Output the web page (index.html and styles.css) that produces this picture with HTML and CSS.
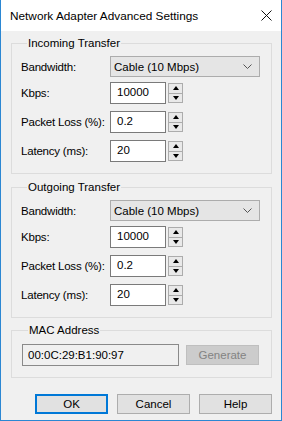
FILE: index.html
```html
<!DOCTYPE html>
<html lang="en">
<head>
    <meta charset="UTF-8">
    <title>Network Adapter Advanced Settings</title>
    <link rel="stylesheet" href="styles.css">
</head>
<body>
    <div class="window">
        <div class="titlebar">
            <span class="title">Network Adapter Advanced Settings</span>
            <svg class="close" width="11" height="11" viewBox="0 0 11 11">
                <path d="M0.5 0.5 L10.5 10.5 M10.5 0.5 L0.5 10.5" stroke="#111" stroke-width="1" fill="none"/>
            </svg>
        </div>

        <div class="content">
            <fieldset class="group">
                <legend>Incoming Transfer</legend>
                <div class="row row-select">
                    <span class="label">Bandwidth:</span>
                    <div class="select">
                        <span>Cable (10 Mbps)</span>
                        <svg width="9" height="6" viewBox="0 0 9 6"><path d="M0.5 0.5 L4.5 4.5 L8.5 0.5" stroke="#555" fill="none"/></svg>
                    </div>
                </div>
                <div class="row">
                    <span class="label">Kbps:</span>
                    <div class="field"><span class="input">10000</span><div class="spin"><span class="up"></span><span class="down"></span></div></div>
                </div>
                <div class="row">
                    <span class="label">Packet Loss (%):</span>
                    <div class="field"><span class="input">0.2</span><div class="spin"><span class="up"></span><span class="down"></span></div></div>
                </div>
                <div class="row">
                    <span class="label">Latency (ms):</span>
                    <div class="field"><span class="input">20</span><div class="spin"><span class="up"></span><span class="down"></span></div></div>
                </div>
            </fieldset>

            <fieldset class="group group-out">
                <legend>Outgoing Transfer</legend>
                <div class="row row-select">
                    <span class="label">Bandwidth:</span>
                    <div class="select">
                        <span>Cable (10 Mbps)</span>
                        <svg width="9" height="6" viewBox="0 0 9 6"><path d="M0.5 0.5 L4.5 4.5 L8.5 0.5" stroke="#555" fill="none"/></svg>
                    </div>
                </div>
                <div class="row">
                    <span class="label">Kbps:</span>
                    <div class="field"><span class="input">10000</span><div class="spin"><span class="up"></span><span class="down"></span></div></div>
                </div>
                <div class="row">
                    <span class="label">Packet Loss (%):</span>
                    <div class="field"><span class="input">0.2</span><div class="spin"><span class="up"></span><span class="down"></span></div></div>
                </div>
                <div class="row">
                    <span class="label">Latency (ms):</span>
                    <div class="field"><span class="input">20</span><div class="spin"><span class="up"></span><span class="down"></span></div></div>
                </div>
            </fieldset>

            <fieldset class="group group-mac">
                <legend>MAC Address</legend>
                <div class="mac-row">
                    <span class="mac-input">00:0C:29:B1:90:97</span>
                    <span class="btn btn-disabled">Generate</span>
                </div>
            </fieldset>

            <div class="buttons">
                <span class="btn btn-default">OK</span>
                <span class="btn">Cancel</span>
                <span class="btn">Help</span>
            </div>
        </div>
    </div>
</body>
</html>
```

FILE: styles.css
```css
* {
    margin: 0;
    padding: 0;
    box-sizing: border-box;
}

body {
    font-family: "Liberation Sans", Arial, sans-serif;
    font-size: 11.5px;
    color: #000;
    background: #fff;
}

.window {
    width: 282px;
    height: 421px;
    display: flex;
    flex-direction: column;
    border: 1px solid #2b87d3;
    border-top: none;
    background: #f0f0f0;
}

.titlebar {
    height: 31px;
    background: #fff;
    display: flex;
    align-items: center;
    justify-content: space-between;
    padding: 0 9px 0 9px;
}

.title {
    font-size: 11.8px;
}

.content {
    flex: 1;
    padding: 0 9px 0 10px;
    display: flex;
    flex-direction: column;
}

.group {
    border: 1px solid #dcdcdc;
    margin-top: 4px;
    padding: 5px 9px 11px 9px;
}

.group-out {
    margin-top: 5px;
}

.group legend {
    line-height: 16px;
    padding: 0 1px;
    margin-left: 6px;
}

.row {
    display: flex;
    align-items: center;
    height: 22px;
    margin-top: 7px;
}

.row-select {
    height: 21px;
    margin-top: 0;
}

.row-select + .row {
    margin-top: 5px;
}

.label {
    width: 89px;
    flex-shrink: 0;
    white-space: nowrap;
    letter-spacing: -0.2px;
}

.select {
    width: 150px;
    height: 21px;
    background: #e5e5e5;
    border: 1px solid #acacac;
    display: flex;
    align-items: center;
    justify-content: space-between;
    padding: 0 7px 0 3px;
}

.field {
    display: flex;
    align-items: center;
    gap: 2px;
}

.input {
    width: 56px;
    height: 22px;
    background: #fff;
    border: 1px solid #7a7a7a;
    padding-left: 6px;
    line-height: 18px;
}

.spin {
    display: flex;
    flex-direction: column;
    width: 15px;
    height: 20px;
}

.spin span {
    flex: 1;
    background: #e9e9e9;
    border: 1px solid #acacac;
    display: flex;
    align-items: center;
    justify-content: center;
}

.spin .down {
    border-top: none;
}

.spin span::after {
    content: "";
    border-left: 3px solid transparent;
    border-right: 3px solid transparent;
}

.spin .up::after {
    border-bottom: 4px solid #000;
}

.spin .down::after {
    border-top: 4px solid #000;
}

.group-mac {
    margin-top: 4px;
    padding: 6px 12px 11px 10px;
}

.mac-row {
    display: flex;
    align-items: center;
    justify-content: space-between;
}

.mac-input {
    width: 157px;
    height: 22px;
    border: 1px solid #8a8a8a;
    background: #f0f0f0;
    padding-left: 5px;
    line-height: 20px;
}

.btn {
    width: 73px;
    height: 20px;
    background: #e1e1e1;
    border: 1px solid #adadad;
    display: flex;
    align-items: center;
    justify-content: center;
}

.btn-disabled {
    background: #cccccc;
    border-color: #bfbfbf;
    color: #838383;
}

.btn-default {
    border: 2px solid #0078d7;
}

.buttons {
    display: flex;
    justify-content: flex-end;
    gap: 9px;
    margin-top: 16px;
}
```
